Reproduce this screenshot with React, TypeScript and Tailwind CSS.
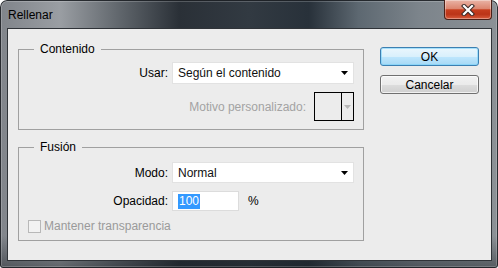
import React from "react";

function DownArrow({ color = "#000" }: { color?: string }) {
  return (
    <svg width="7" height="4" viewBox="0 0 7 4" className="shrink-0">
      <polygon points="0,0 7,0 3.5,4" fill={color} />
    </svg>
  );
}

function CloseGlyph() {
  return (
    <svg width="14" height="12" viewBox="0 0 14 12">
      <path d="M3 2 L11 10 M11 2 L3 10" stroke="#3a2a28" strokeWidth="4.2" strokeLinecap="square" />
      <path d="M3 2 L11 10 M11 2 L3 10" stroke="#ffffff" strokeWidth="2.2" strokeLinecap="square" />
    </svg>
  );
}

function Select({ value }: { value: string }) {
  return (
    <div className="w-[182px] h-full bg-white border border-[#e2e2e2] flex items-center justify-between pl-[5px] pr-[5px] text-[#111]">
      <span>{value}</span>
      <DownArrow />
    </div>
  );
}

export default function App() {
  return (
    <div className="w-[498px] h-[268px] flex flex-col pl-[7px] pr-[6px] pb-[7px] rounded-t-[7px] rounded-b-[3px] bg-[linear-gradient(180deg,rgba(0,0,0,0)_88%,rgba(20,26,32,0.45)_100%),linear-gradient(90deg,#80848a_0%,#9a9ea3_12%,#60666c_24%,#2a3037_36%,#323a42_50%,#28313a_62%,#5d6871_72%,#7c848b_84%,#8c9196_100%)] shadow-[inset_0_0_0_1px_rgba(20,24,28,0.85),inset_0_0_0_2px_rgba(255,255,255,0.2)] font-['Liberation_Sans',Arial,sans-serif] text-[12px] leading-[14px]">
      <div className="h-[28px] flex justify-between items-start">
        <span className="pl-[1px] pt-[8px] text-black">Rellenar</span>
        <div className="w-[48px] h-[20px] rounded-b-[4px] border border-t-0 border-[#4a2018] bg-[linear-gradient(180deg,#e9b4a6_0%,#dc8670_45%,#c63e1e_52%,#bb3418_75%,#d85c3c_100%)] shadow-[inset_0_0_0_1px_rgba(255,255,255,0.35)] flex items-center justify-center">
          <CloseGlyph />
        </div>
      </div>

      <div className="flex-1 bg-[#ececec] border border-[#2f3338] flex text-black">
        <div className="w-[346px] ml-[10px] flex flex-col">
          <fieldset className="mt-[13px] border border-[#a0a0a0] flex flex-col">
            <legend className="ml-[15px] px-[6px] leading-[14px]">Contenido</legend>
            <div className="mt-[6px] h-[22px] flex items-center gap-[4px]">
              <span className="w-[149px] text-right">Usar:</span>
              <Select value="Según el contenido" />
            </div>
            <div className="mt-[8px] mb-[8px] h-[29px] flex items-center justify-end gap-[8px] pr-[9px]">
              <span className="text-[#a3a3a3]">Motivo personalizado:</span>
              <div className="w-[40px] h-[29px] border border-black flex">
                <div className="w-[27px] h-full border-r border-black" />
                <div className="flex-1 flex items-center justify-center">
                  <DownArrow color="#b8b8b8" />
                </div>
              </div>
            </div>
          </fieldset>

          <fieldset className="mt-[10px] border border-[#a0a0a0] flex flex-col">
            <legend className="ml-[15px] px-[6px] leading-[14px]">Fusión</legend>
            <div className="mt-[8px] h-[21px] flex items-center gap-[4px]">
              <span className="w-[149px] text-right">Modo:</span>
              <Select value="Normal" />
            </div>
            <div className="mt-[8px] h-[20px] flex items-center gap-[4px]">
              <span className="w-[149px] text-right">Opacidad:</span>
              <div className="w-[67px] h-full bg-white border border-[#dcdcdc] flex items-center pl-[5px]">
                <span className="bg-[#3399ff] text-white px-[1px] leading-[15px]">100</span>
              </div>
              <span className="ml-[5px]">%</span>
            </div>
            <div className="mt-[8px] mb-[7px] flex items-center gap-[3px] pl-[9px]">
              <div className="w-[13px] h-[13px] border border-[#b8b8b8] bg-[#f2f2f2]" />
              <span className="text-[#9a9a9a]">Mantener transparencia</span>
            </div>
          </fieldset>
        </div>

        <div className="ml-[16px] mt-[18px] flex flex-col gap-[9px]">
          <button className="w-[99px] h-[19px] rounded-[3px] border border-[#3c7fb1] bg-[linear-gradient(180deg,#eaf6fd_0%,#d9f0fc_50%,#bee6fd_51%,#a7d9f5_100%)] shadow-[inset_0_0_0_1px_rgba(120,210,250,0.6)] flex items-center justify-center leading-[14px]">
            OK
          </button>
          <button className="w-[99px] h-[19px] rounded-[3px] border border-[#707070] bg-[linear-gradient(180deg,#f2f2f2_0%,#ebebeb_50%,#dddddd_51%,#cfcfcf_100%)] shadow-[inset_0_0_0_1px_rgba(255,255,255,0.7)] flex items-center justify-center leading-[14px]">
            Cancelar
          </button>
        </div>
      </div>
    </div>
  );
}
